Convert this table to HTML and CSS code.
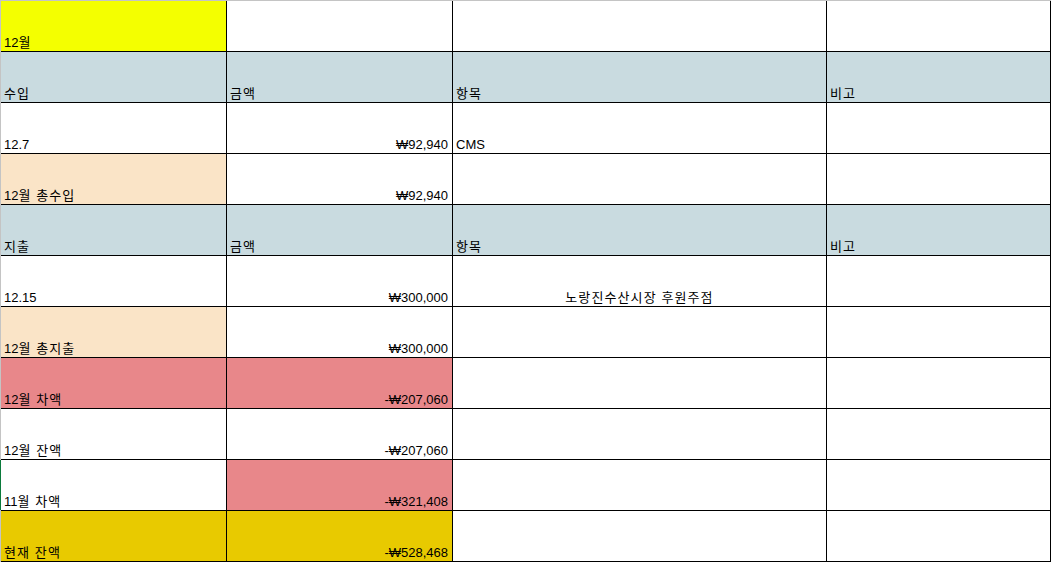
FILE: index.html
```html
<!DOCTYPE html>
<html lang="ko">
<head>
<meta charset="utf-8">
<title>12월 회계</title>
<link rel="stylesheet" href="styles.css">
</head>
<body>
<div class="sheet">
  <div class="cell yellow"><span>12<span class="ko">월</span></span></div>
  <div class="cell"></div>
  <div class="cell"></div>
  <div class="cell"></div>

  <div class="cell head"><span class="ko">수입</span></div>
  <div class="cell head"><span class="ko">금액</span></div>
  <div class="cell head"><span class="ko">항목</span></div>
  <div class="cell head"><span class="ko">비고</span></div>

  <div class="cell">12.7</div>
  <div class="cell num">₩92,940</div>
  <div class="cell">CMS</div>
  <div class="cell"></div>

  <div class="cell peach"><span>12<span class="ko">월 총수입</span></span></div>
  <div class="cell num">₩92,940</div>
  <div class="cell"></div>
  <div class="cell"></div>

  <div class="cell head"><span class="ko">지출</span></div>
  <div class="cell head"><span class="ko">금액</span></div>
  <div class="cell head"><span class="ko">항목</span></div>
  <div class="cell head"><span class="ko">비고</span></div>

  <div class="cell">12.15</div>
  <div class="cell num">₩300,000</div>
  <div class="cell center"><span class="ko">노랑진수산시장 후원주점</span></div>
  <div class="cell"></div>

  <div class="cell peach"><span>12<span class="ko">월 총지출</span></span></div>
  <div class="cell num">₩300,000</div>
  <div class="cell"></div>
  <div class="cell"></div>

  <div class="cell pink"><span>12<span class="ko">월 차액</span></span></div>
  <div class="cell num pink">-₩207,060</div>
  <div class="cell"></div>
  <div class="cell"></div>

  <div class="cell"><span>12<span class="ko">월 잔액</span></span></div>
  <div class="cell num">-₩207,060</div>
  <div class="cell"></div>
  <div class="cell"></div>

  <div class="cell selected"><span>11<span class="ko">월 차액</span></span></div>
  <div class="cell num pink">-₩321,408</div>
  <div class="cell"></div>
  <div class="cell"></div>

  <div class="cell gold"><span class="ko">현재 잔액</span></div>
  <div class="cell num gold">-₩528,468</div>
  <div class="cell"></div>
  <div class="cell"></div>
</div>
</body>
</html>
```
FILE: styles.css
```css
html, body {
  margin: 0;
  padding: 0;
  background: #ffffff;
}

.sheet {
  display: grid;
  grid-template-columns: 225px 225px 373px 223px;
  grid-auto-rows: 50px;
  gap: 1px;
  background: #000000;
  width: max-content;
  border-top: 1px solid #c4c4c4;
  border-left: 1px solid #c4c4c4;
  padding: 0 1px 1px 0;
  font-family: "Liberation Sans", "Noto Sans CJK KR", sans-serif;
  font-size: 13px;
  color: #000000;
}

.cell {
  background: #ffffff;
  display: flex;
  align-items: flex-end;
  padding: 0 3px 1px 3px;
  line-height: 15px;
  white-space: nowrap;
  overflow: hidden;
}

.ko {
  letter-spacing: 1.1px;
}

.num {
  justify-content: flex-end;
  padding-right: 4px;
}

.center {
  justify-content: center;
}

.yellow { background: #f4ff00; }
.head { background: #c9dbe0; }
.peach { background: #fae4c7; }
.pink { background: #e8878a; }
.gold { background: #e8ca00; }

.selected {
  box-shadow: -1px 0 0 #0b7a3b;
}
```
